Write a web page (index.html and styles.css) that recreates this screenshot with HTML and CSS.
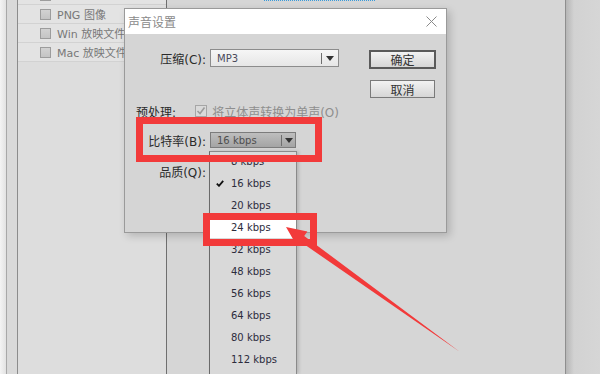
FILE: index.html
```html
<!DOCTYPE html>
<html lang="zh-CN">
<head>
  <meta charset="UTF-8">
  <title>声音设置</title>
  <link rel="stylesheet" href="styles.css">
</head>
<body>
  <div class="app">
    <div class="edge"></div>
    <div class="rail"></div>
    <div class="files">
      <div class="file-row first"><span class="box"></span></div>
      <div class="file-row"><span class="box"></span><span>PNG 图像</span></div>
      <div class="file-row"><span class="box"></span><span>Win 放映文件</span></div>
      <div class="file-row"><span class="box"></span><span>Mac 放映文件</span></div>
    </div>
    <div class="stage"><div class="dots"></div></div>
    <div class="side"></div>
  </div>

  <div class="dialog">
    <div class="titlebar">
      <span class="title">声音设置</span>
      <svg class="close" width="11" height="11" viewBox="0 0 11 11">
        <path d="M0.5 0.5L10.5 10.5M10.5 0.5L0.5 10.5" stroke="#8a8a8a" stroke-width="1"/>
      </svg>
    </div>
    <div class="dialog-body">
      <div class="form">
        <div class="field f1">
          <span class="field-label">压缩(C):</span>
          <div class="select">
            <span class="select-value">MP3</span>
            <span class="select-arrow"><i class="tri"></i></span>
          </div>
        </div>
        <div class="field f2">
          <span class="field-label left">预处理:</span>
          <span class="check-off">
            <svg width="10" height="10" viewBox="0 0 10 10"><path d="M1.5 5L4 7.5L8.5 1.5" stroke="#9c9c9c" stroke-width="1.6" fill="none"/></svg>
          </span>
          <span class="muted">将立体声转换为单声(O)</span>
        </div>
        <div class="field f3">
          <span class="field-label">比特率(B):</span>
          <div class="select bitrate">
            <span class="select-value">16 kbps</span>
            <span class="select-arrow"><i class="tri"></i></span>
          </div>
        </div>
        <div class="field f4">
          <span class="field-label">品质(Q):</span>
        </div>
      </div>
      <div class="buttons">
        <div class="btn default">确定</div>
        <div class="btn">取消</div>
      </div>
    </div>
  </div>

  <div class="dropdown">
    <div class="item first"><span class="tick-slot"></span>8 kbps</div>
    <div class="item"><span class="tick-slot"><svg width="8" height="7" viewBox="0 0 8 7"><path d="M0.8 3.6L3 5.8L7.2 0.8" stroke="#111" stroke-width="1.8" fill="none"/></svg></span>16 kbps</div>
    <div class="item"><span class="tick-slot"></span>20 kbps</div>
    <div class="item hover"><span class="tick-slot"></span>24 kbps</div>
    <div class="item"><span class="tick-slot"></span>32 kbps</div>
    <div class="item"><span class="tick-slot"></span>48 kbps</div>
    <div class="item"><span class="tick-slot"></span>56 kbps</div>
    <div class="item"><span class="tick-slot"></span>64 kbps</div>
    <div class="item"><span class="tick-slot"></span>80 kbps</div>
    <div class="item"><span class="tick-slot"></span>112 kbps</div>
  </div>

  <div class="mark mark-rate"></div>
  <div class="mark mark-item"></div>

  <svg class="arrow" width="600" height="374" viewBox="0 0 600 374">
    <polygon points="286,227 307.4,231.4 304.2,235.9 460,352 300.2,241.5 297,246" fill="#f23a3a"/>
  </svg>
</body>
</html>
```

FILE: styles.css
```css
body {
  margin: 0;
  width: 600px;
  height: 374px;
  overflow: hidden;
  position: relative;
  background: #d6d6d6;
  font-family: "DejaVu Sans", "Noto Sans CJK SC", sans-serif;
  font-size: 12px;
  color: #333;
}

/* background window */
.app {
  display: flex;
  height: 374px;
}

.edge {
  width: 6px;
  background: linear-gradient(to right, #f4f4f4, #e2e2e2);
  border-right: 1px solid #a8a8a8;
}

.rail {
  width: 10px;
  background: #d9d9d9;
  border-right: 1px solid #8c8c8c;
}

.files {
  width: 148px;
  background: #dddddd;
  border-right: 1px solid #6f6f6f;
}

.file-row {
  height: 18px;
  border-bottom: 1px solid #d2d2d2;
  background: #e3e3e3;
  display: flex;
  align-items: center;
  gap: 6px;
  padding-left: 22px;
  font-size: 11px;
  color: #787878;
  white-space: nowrap;
  overflow: hidden;
}

.file-row.first {
  margin-top: -14px;
}

.box {
  width: 9px;
  height: 9px;
  flex: none;
  border: 1px solid #9c9c9c;
  background: linear-gradient(#d2d2d2, #c4c4c4);
}

.stage {
  width: 398px;
  border-right: 1px solid #8e8e8e;
}

.dots {
  margin-left: 97px;
  width: 111px;
  border-top: 1px dotted #3a9ad9;
}

.side {
  flex: 1;
  background: linear-gradient(to right, #b6b6b6, #d2d2d2 8px, #d6d6d6);
}

/* dialog */
.dialog {
  position: absolute;
  left: 124px;
  top: 8px;
  width: 321px;
  height: 223px;
  border: 1px solid #9a9a9a;
  background: #d5d5d5;
  box-shadow: 3px 3px 8px rgba(0,0,0,0.18);
}

.titlebar {
  height: 25px;
  background: #fff;
  display: flex;
  align-items: center;
  justify-content: space-between;
  padding: 0 9px 0 3px;
}

.title {
  color: #8a8a8a;
}

.dialog-body {
  display: flex;
}

.form {
  width: 214px;
  padding-top: 15px;
}

.field {
  display: flex;
  align-items: center;
  height: 16px;
  white-space: nowrap;
}

.field-label {
  width: 81px;
  margin-right: 4px;
  text-align: right;
  color: #2a2a2a;
}

.field-label.left {
  text-align: left;
  padding-left: 11px;
  box-sizing: border-box;
}

.f1 { height: 18px; }
.f2 { margin-top: 36px; }
.f3 { margin-top: 13px; }
.f4 { margin-top: 15px; }

.select {
  width: 129px;
  height: 18px;
  box-sizing: border-box;
  border: 1px solid #8c8c8c;
  background: linear-gradient(#f6f6f6, #e6e6e6);
  display: flex;
  align-items: center;
  font-size: 10px;
  color: #4a4a5a;
}

.select-value {
  flex: 1;
  padding-left: 6px;
}

.select-arrow {
  width: 16px;
  height: 11px;
  border-left: 1px solid #6e6e6e;
  display: flex;
  align-items: center;
  justify-content: center;
}

.tri {
  width: 0;
  height: 0;
  border-left: 4px solid transparent;
  border-right: 4px solid transparent;
  border-top: 5px solid #333;
}

.select.bitrate {
  width: 86px;
  height: 16px;
  border-color: #7c7c7c;
  background: linear-gradient(#bebebe, #a4a4a4);
  color: #4e4e4e;
}

.select.bitrate .select-arrow {
  width: 13px;
}

.check-off {
  width: 10px;
  height: 10px;
  border: 1px solid #a6a6a6;
  background: #dadada;
  display: flex;
  align-items: center;
  justify-content: center;
  margin-right: 5px;
}

.muted {
  color: #8e8e8e;
}

.buttons {
  margin-left: 30px;
  padding-top: 16px;
  display: flex;
  flex-direction: column;
  gap: 11px;
}

.btn {
  width: 65px;
  height: 18px;
  margin-left: 1px;
  box-sizing: border-box;
  border: 1px solid #7a7a7a;
  background: linear-gradient(#f2f2f2, #d6d6d6);
  display: flex;
  align-items: center;
  justify-content: center;
  color: #333;
}

.btn.default {
  width: 67px;
  height: 19px;
  margin-left: 0;
  border: 2px solid #5a5a5a;
}

/* open list */
.dropdown {
  position: absolute;
  left: 209px;
  top: 151px;
  width: 86px;
  height: 222px;
  overflow: hidden;
  background: #d9d9d9;
  border: 1px solid #8a8a8a;
  border-bottom: none;
  border-left-color: #6a6a6a;
  box-shadow: 2px 0 3px rgba(0,0,0,0.15);
}

.item {
  height: 22px;
  display: flex;
  align-items: center;
  padding-left: 6px;
  font-size: 10px;
  color: #2c2c3c;
}

.item.first {
  margin-top: -2px;
}

.item.hover {
  background: #fff;
}

.tick-slot {
  width: 15px;
  display: flex;
  align-items: center;
}

/* annotations */
.mark {
  position: absolute;
  box-sizing: border-box;
  border: 7px solid #f23a3a;
}

.mark-rate {
  left: 136px;
  top: 117px;
  width: 186px;
  height: 45px;
}

.mark-item {
  left: 203px;
  top: 213px;
  width: 114px;
  height: 33px;
}

.arrow {
  position: absolute;
  left: 0;
  top: 0;
  pointer-events: none;
}
```
